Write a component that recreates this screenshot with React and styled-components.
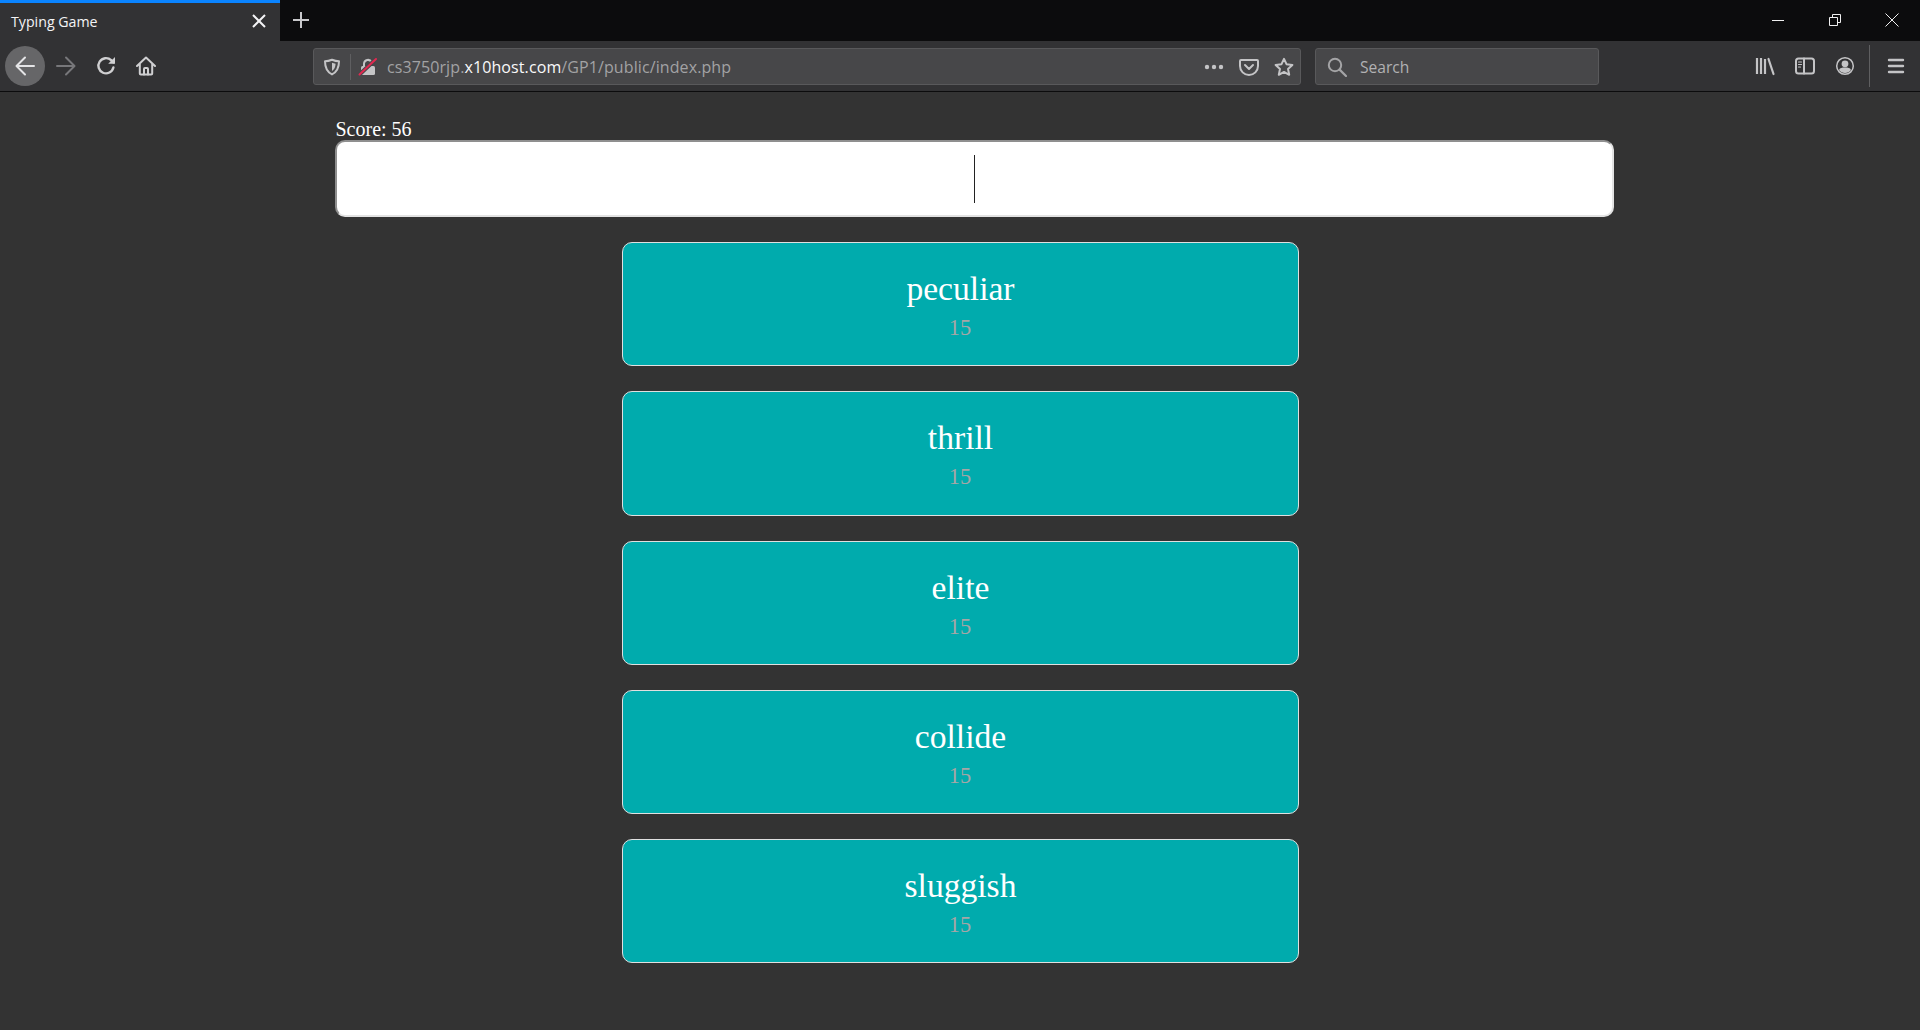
import React from "react";
import styled, { createGlobalStyle } from "styled-components";

const GlobalStyle = createGlobalStyle`
  html, body {
    margin: 0;
    padding: 0;
    height: 100%;
    background: #333333;
  }
  body {
    font-family: "Liberation Serif", "Times New Roman", serif;
    overflow: hidden;
  }
  * {
    box-sizing: border-box;
  }
`;

const Page = styled.div`
  display: flex;
  flex-direction: column;
  height: 1030px;
`;

const TabBar = styled.div`
  display: flex;
  align-items: stretch;
  height: 41px;
  background: #0c0c0d;
`;
const Tab = styled.div`
  display: flex;
  align-items: center;
  justify-content: space-between;
  width: 280px;
  padding: 0 11px 0 11px;
  background: #323234;
  border-top: 3px solid #0a84ff;
  color: #f4f4f6;
  font: 14.2px "Open Sans", sans-serif;
`;
const TabTitle = styled.span`
  padding-bottom: 2px;
`;
const TabClose = styled.span`
  display: flex;
  margin-bottom: 2px;
`;
const NewTab = styled.div`
  display: flex;
  align-items: center;
  justify-content: center;
  width: 42px;
  padding-bottom: 2px;
`;
const WindowControls = styled.div`
  display: flex;
  margin-left: auto;
`;
const WindowButton = styled.div`
  display: flex;
  align-items: center;
  justify-content: center;
  width: 57px;
  padding-bottom: 2px;
`;

const Toolbar = styled.div`
  display: flex;
  align-items: center;
  height: 51px;
  padding-left: 5px;
  background: #323234;
  border-bottom: 1px solid #0c0c0d;
`;
const NavButton = styled.div`
  display: flex;
  align-items: center;
  justify-content: center;
  width: 40px;
  height: 40px;
  border-radius: 50%;
  background: ${(p) => (p.$active ? "#666668" : "transparent")};
`;
const ForwardButton = styled(NavButton)`
  margin-left: 1px;
`;
const Field = styled.div`
  display: flex;
  align-items: center;
  height: 37px;
  margin-top: 1px;
  background: #474749;
  border: 1px solid #59595b;
  border-radius: 3px;
  font-family: "Open Sans", sans-serif;
`;
const UrlBar = styled(Field)`
  width: 988px;
  margin-left: 147px;
  padding-left: 8px;
`;
const SearchBar = styled(Field)`
  width: 284px;
  margin-left: 14px;
  padding-left: 11px;
  gap: 13px;
  color: #b1b1b3;
  font-size: 15.6px;
`;
const SearchLabel = styled.span`
  padding-top: 1px;
`;
const SiteIcon = styled.span`
  display: flex;
  width: 20px;
  justify-content: center;
`;
const Divider = styled.span`
  width: 1px;
  height: 26px;
  margin: 0 7px 0 8px;
  background: #5f5f61;
`;
const UrlText = styled.span`
  margin-left: 9px;
  padding-top: 1px;
  color: #a2a2a4;
  font-size: 16px;
  letter-spacing: 0.1px;
  white-space: nowrap;
`;
const UrlHost = styled.span`
  color: #f9f9fa;
`;
const UrlActions = styled.div`
  display: flex;
  align-items: center;
  gap: 15px;
  margin-left: auto;
  margin-right: 6px;
`;
const RightTools = styled.div`
  display: flex;
  align-items: center;
  margin-left: 146px;
`;
const ToolSeparator = styled.span`
  width: 1px;
  height: 42px;
  margin: 0 6px 0 4px;
  background: #5f5f61;
`;

const Main = styled.main`
  display: flex;
  flex-direction: column;
  align-items: center;
  flex: 1;
  padding-top: 26px;
  background: #333333;
`;
const Game = styled.div`
  width: 1279px;
  margin-left: 28px;
`;
const Score = styled.div`
  padding-left: 1px;
  color: #ffffff;
  font-size: 20px;
  line-height: 22px;
`;
const InputWrap = styled.div`
  position: relative;
  height: 77px;
`;
const WordInput = styled.input`
  display: block;
  width: 100%;
  height: 100%;
  background: #ffffff;
  border: 2px inset #e3e3e3;
  border-radius: 10px;
  outline: none;
  text-align: center;
  font-size: 40px;
  caret-color: transparent;
`;
const Caret = styled.span`
  position: absolute;
  left: 639px;
  top: 15px;
  width: 1px;
  height: 48px;
  background: #222222;
`;
const WordList = styled.div`
  display: flex;
  flex-direction: column;
  gap: 25px;
  width: 677px;
  margin-top: 25px;
  margin-left: 1px;
`;
const Card = styled.div`
  display: flex;
  flex-direction: column;
  align-items: center;
  gap: 7px;
  height: 124.25px;
  padding-top: 27px;
  background: #00abad;
  border: 1px solid #e0e0e0;
  border-radius: 10px;
`;
const Word = styled.div`
  color: #ffffff;
  font-size: 33.6px;
`;
const Points = styled.div`
  padding-right: 1px;
  color: #a6a6a6;
  font-size: 22.4px;
`;

const stroke = (color, w = 2) => ({
  fill: "none",
  stroke: color,
  strokeWidth: w,
  strokeLinecap: "round",
  strokeLinejoin: "round",
});

const Svg = ({ size = 20, w, h, children }) => (
  <svg width={w || size} height={h || size} viewBox={`0 0 ${w || size} ${h || size}`}>
    {children}
  </svg>
);

const words = ["peculiar", "thrill", "elite", "collide", "sluggish"];

export default function App() {
  return (
    <Page>
      <GlobalStyle />
      <TabBar>
        <Tab>
          <TabTitle>Typing Game</TabTitle>
          <TabClose>
            <Svg size={20}>
              <path d="M4 4 L16 16 M16 4 L4 16" {...stroke("#f4f4f6", 2)} strokeLinecap="butt" />
            </Svg>
          </TabClose>
        </Tab>
        <NewTab>
          <Svg size={20}>
            <path d="M10 2 V18 M2 10 H18" {...stroke("#c9c9cb", 2)} strokeLinecap="butt" />
          </Svg>
        </NewTab>
        <WindowControls>
          <WindowButton>
            <Svg size={14}>
              <path d="M1 7.5 H13" stroke="#f0f0f0" strokeWidth="1" />
            </Svg>
          </WindowButton>
          <WindowButton>
            <Svg size={14}>
              <path d="M1.5 4.5 H9.5 V12.5 H1.5 Z M4.5 4.5 V1.5 H12.5 V9.5 H9.5" fill="none" stroke="#f0f0f0" strokeWidth="1" />
            </Svg>
          </WindowButton>
          <WindowButton>
            <Svg size={14}>
              <path d="M0.5 0.5 L13.5 13.5 M13.5 0.5 L0.5 13.5" stroke="#f0f0f0" strokeWidth="1" />
            </Svg>
          </WindowButton>
        </WindowControls>
      </TabBar>

      <Toolbar>
        <NavButton $active>
          <Svg size={22}>
            <path d="M11 2.5 L2.5 11 L11 19.5 M3 11 H20" {...stroke("#e4e4e6", 2)} />
          </Svg>
        </NavButton>
        <ForwardButton>
          <Svg size={22}>
            <path d="M11 2.5 L19.5 11 L11 19.5 M19 11 H2" {...stroke("#77777a", 2)} />
          </Svg>
        </ForwardButton>
        <NavButton>
          <Svg size={20}>
            <path d="M17.4 11.5 A7.6 7.6 0 1 1 15.2 4.2 L17.5 6.5" {...stroke("#cfcfd1", 2.4)} />
            <path d="M19 1 V7.8 H12.2 Z" fill="#cfcfd1" />
          </Svg>
        </NavButton>
        <NavButton>
          <Svg size={20}>
            <path d="M1 10 L10 1.5 L19 10 M3.8 8 V17.6 A1 1 0 0 0 4.8 18.6 H15.2 A1 1 0 0 0 16.2 17.6 V8" {...stroke("#cfcfd1", 2)} />
            <path d="M8 18.6 V13 A1 1 0 0 1 9 12 H11 A1 1 0 0 1 12 13 V18.6" {...stroke("#cfcfd1", 2)} />
          </Svg>
        </NavButton>

        <UrlBar>
          <SiteIcon>
            <Svg size={18}>
              <path d="M9 1.8 C11.5 2.8 13.5 3.3 16 3.3 C16 10 14 14 9 16.4 C4 14 2 10 2 3.3 C4.5 3.3 6.5 2.8 9 1.8 Z" {...stroke("#c4c4c6", 2)} />
              <path d="M9 4.8 C10.2 5.3 11.2 5.6 12.6 5.7 C12.4 9.5 11.2 11.6 9 13 Z" fill="#c4c4c6" />
            </Svg>
          </SiteIcon>
          <Divider />
          <SiteIcon>
            <Svg size={20}>
              <path d="M6 9 V6.5 A4 4 0 0 1 13.5 5" {...stroke("#c4c4c6", 2)} />
              <rect x="3" y="9" width="14" height="9" rx="1.5" fill="#c4c4c6" />
              <path d="M1.5 17.5 L18 2" {...stroke("#474749", 4)} strokeLinecap="butt" />
              <path d="M1.5 17.5 L18 2" {...stroke("#e22850", 2)} />
            </Svg>
          </SiteIcon>
          <UrlText>
            cs3750rjp.<UrlHost>x10host.com</UrlHost>/GP1/public/index.php
          </UrlText>
          <UrlActions>
            <Svg w={20} h={6}>
              <circle cx="3" cy="3" r="2.2" fill="#c4c4c6" />
              <circle cx="10" cy="3" r="2.2" fill="#c4c4c6" />
              <circle cx="17" cy="3" r="2.2" fill="#c4c4c6" />
            </Svg>
            <Svg size={20}>
              <path d="M2 3 H18 A1 1 0 0 1 19 4 V9 A9 9 0 0 1 1 9 V4 A1 1 0 0 1 2 3 Z" {...stroke("#c4c4c6", 2)} />
              <path d="M6 8 L10 12 L14 8" {...stroke("#c4c4c6", 2)} />
            </Svg>
            <Svg size={20}>
              <path d="M10 1.8 L12.5 7.2 L18.4 7.9 L14 11.9 L15.2 17.8 L10 14.9 L4.8 17.8 L6 11.9 L1.6 7.9 L7.5 7.2 Z" {...stroke("#c4c4c6", 2)} />
            </Svg>
          </UrlActions>
        </UrlBar>

        <SearchBar>
          <Svg size={20}>
            <circle cx="8" cy="8" r="6.2" {...stroke("#a4a4a6", 2)} />
            <path d="M12.6 12.6 L19 19" {...stroke("#a4a4a6", 2.2)} />
          </Svg>
          <SearchLabel>Search</SearchLabel>
        </SearchBar>

        <RightTools>
          <NavButton>
            <Svg size={20}>
              <path d="M2 2 V18 M6 2 V18 M10 3 V18" {...stroke("#c4c4c6", 2.2)} strokeLinecap="butt" />
              <path d="M13.5 3 L18.5 18" {...stroke("#c4c4c6", 2.2)} />
            </Svg>
          </NavButton>
          <NavButton>
            <Svg size={20}>
              <rect x="1" y="2.5" width="18" height="15" rx="2.5" {...stroke("#c4c4c6", 2)} />
              <path d="M9 2.5 V17.5" {...stroke("#c4c4c6", 2)} />
              <path d="M3.5 6 H6.5 M3.5 8.5 H6.5 M3.5 11 H5.5" {...stroke("#c4c4c6", 1.2)} />
            </Svg>
          </NavButton>
          <NavButton>
            <Svg size={20}>
              <circle cx="10" cy="10" r="8.3" {...stroke("#c4c4c6", 1.5)} />
              <circle cx="10" cy="7.8" r="3.4" fill="#c4c4c6" />
              <path d="M4 14 C5 11.8 7 11.6 10 11.6 C13 11.6 15 11.8 16 14 C14.5 16 12.5 17 10 17 C7.5 17 5.5 16 4 14 Z" fill="#c4c4c6" />
            </Svg>
          </NavButton>
          <ToolSeparator />
          <NavButton>
            <Svg size={20}>
              <path d="M3 4 H17 M3 10 H17 M3 16 H17" {...stroke("#c4c4c6", 2.4)} />
            </Svg>
          </NavButton>
        </RightTools>
      </Toolbar>

      <Main>
        <Game>
          <Score>Score: 56</Score>
          <InputWrap>
            <WordInput type="text" />
            <Caret />
          </InputWrap>
        </Game>
        <WordList>
          {words.map((word) => (
            <Card key={word}>
              <Word>{word}</Word>
              <Points>15</Points>
            </Card>
          ))}
        </WordList>
      </Main>
    </Page>
  );
}
